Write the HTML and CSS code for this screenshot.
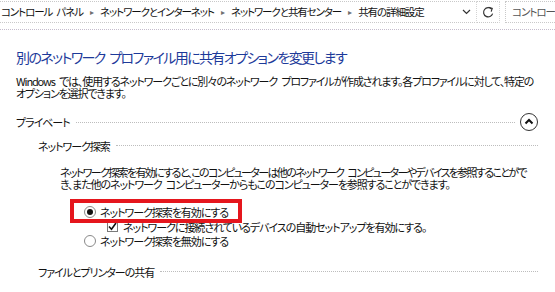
FILE: index.html
```html
<!DOCTYPE html>
<html lang="ja">
<head>
<meta charset="utf-8">
<title>共有の詳細設定</title>
<link rel="stylesheet" href="styles.css">
</head>
<body>
<div class="addrbar">
  <div class="crumbs">
    <span class="crumb">コントロール パネル</span><span class="sep">▸</span>
    <span class="crumb">ネットワークとインターネット</span><span class="sep">▸</span>
    <span class="crumb">ネットワークと共有センター</span><span class="sep">▸</span>
    <span class="crumb">共有の詳細設定</span>
    <span class="spacer"></span>
    <svg class="dd" width="9" height="6" viewBox="0 0 9 6"><path d="M1 1 L4.5 4.5 L8 1" fill="none" stroke="#333" stroke-width="1.2"/></svg>
  </div>
  <div class="refresh">
    <svg width="12" height="13" viewBox="0 0 12 13"><path d="M9.6 3.2 A4.6 4.6 0 1 0 10.6 7.6" fill="none" stroke="#333" stroke-width="1.2"/><path d="M6.6 1.2 L10.2 2.4 L9.2 5.6" fill="none" stroke="#333" stroke-width="1.2"/></svg>
  </div>
  <div class="search">コントロール パネルの検索</div>
</div>
<div class="rule"></div>
<main class="content">
  <h1 class="title">別のネットワーク プロファイル用に共有オプションを変更します</h1>
  <p class="desc">Windows では、使用するネットワークごとに別々のネットワーク プロファイルが作成されます。各プロファイルに対して、特定の<br>オプションを選択できます。</p>
  <div class="group">
    <span class="label">プライベート</span>
    <span class="line"></span>
    <span class="toggle"><svg width="10" height="7" viewBox="0 0 10 7"><path d="M1.5 5.5 L5 2 L8.5 5.5" fill="none" stroke="#111" stroke-width="2"/></svg></span>
  </div>
  <div class="sub">
    <span class="label">ネットワーク探索</span>
    <span class="line"></span>
  </div>
  <p class="para"><span class="pl1">ネットワーク探索を有効にすると、このコンピューターは他のネットワーク コンピューターやデバイスを参照することがで</span><br><span class="pl2">き、また他のネットワーク コンピューターからもこのコンピューターを参照することができます。</span></p>
  <div class="options">
    <div class="opt r1"><span class="radio on"></span><span>ネットワーク探索を有効にする</span></div>
    <div class="opt check"><span class="cb"><svg width="9" height="9" viewBox="0 0 9 9"><path d="M1 4.5 L3.5 7.2 L8 1" fill="none" stroke="#111" stroke-width="1.6"/></svg></span><span>ネットワークに接続されているデバイスの自動セットアップを有効にする。</span></div>
    <div class="opt r3"><span class="radio"></span><span>ネットワーク探索を無効にする</span></div>
    <div class="highlight"></div>
  </div>
  <div class="sub last">
    <span class="label">ファイルとプリンターの共有</span>
    <span class="line"></span>
  </div>
</main>
</body>
</html>
```
FILE: styles.css
```css
* { box-sizing: border-box; }
html, body { margin: 0; padding: 0; }
body {
  width: 555px;
  height: 292px;
  overflow: hidden;
  background: #fff;
  color: #111;
  font-family: "Noto Sans CJK JP", "Noto Sans", sans-serif;
  font-feature-settings: "palt";
  word-spacing: 3px;
}
.addrbar {
  display: flex;
  height: 23px;
  padding-top: 1px;
}
.crumbs {
  width: 477px;
  height: 22px;
  border-top: 1px dotted #c9c9c9;
  border-bottom: 1px dotted #c9c9c9;
  border-right: 1px dotted #d4d4d4;
  display: flex;
  align-items: center;
  padding-left: 1px;
  font-size: 10.5px;
  letter-spacing: -1.1px;
  line-height: 14px;
  white-space: nowrap;
}
.sep {
  color: #707070;
  font-size: 8px;
  letter-spacing: 0;
  margin: 0 6px 0 7px;
}
.spacer { flex: 1; }
.dd { margin-right: 5px; }
.refresh {
  width: 23px;
  height: 22px;
  border-top: 1px dotted #c9c9c9;
  border-bottom: 1px dotted #c9c9c9;
  border-right: 1px dotted #d4d4d4;
  display: flex;
  align-items: center;
  justify-content: center;
}
.search {
  margin-left: 5px;
  flex: 1;
  height: 22px;
  border: 1px dotted #c9c9c9;
  border-right: none;
  padding-left: 6px;
  font-size: 10.5px;
  letter-spacing: -1px;
  line-height: 20px;
  color: #555;
  white-space: nowrap;
  overflow: hidden;
}
.rule {
  margin-top: 6px;
  height: 1px;
  border-top: 1px dotted #c4bccc;
}
.content {
  padding: 0 17px 0 16px;
}
.title {
  margin: 17px 0 0;
  font-size: 14px;
  letter-spacing: -1.6px;
  font-weight: normal;
  line-height: 20px;
  color: #1d3a9a;
  white-space: nowrap;
}
.desc {
  margin: 8px 0 0;
  font-size: 11px;
  letter-spacing: -1.15px;
  line-height: 12px;
  white-space: nowrap;
}
.group {
  margin-top: 14px;
  height: 18px;
  display: flex;
  align-items: center;
}
.label {
  font-size: 11px;
  letter-spacing: -1.05px;
  line-height: 14px;
  white-space: nowrap;
}
.line {
  flex: 1;
  height: 1px;
  border-top: 1px dotted #bdbdbd;
  margin-left: 6px;
}
.group .line { margin-right: 5px; margin-top: 1px; }
.toggle {
  width: 18px;
  height: 18px;
  border: 1px solid #333;
  border-radius: 50%;
  display: flex;
  align-items: center;
  justify-content: center;
}
.toggle svg { margin-top: -1px; }
.sub {
  margin-top: 8px;
  padding-left: 22px;
  height: 14px;
  display: flex;
  align-items: center;
}
.sub .line { margin-top: -2px; }
.sub.last { margin-top: 17px; }
.para {
  margin: 14px 0 0;
  padding-left: 44px;
  font-size: 11px;
  line-height: 11.5px;
  white-space: nowrap;
}
.pl1 { letter-spacing: -1.65px; }
.pl2 { letter-spacing: -1.1px; }
.options {
  position: relative;
  margin-top: 14px;
}
.opt {
  display: flex;
  align-items: center;
  gap: 4px;
  height: 15px;
  padding-left: 68px;
  font-size: 11px;
  letter-spacing: -1.05px;
  white-space: nowrap;
}
.opt.r3 { height: 14px; }
.opt.check { padding-left: 91px; gap: 5px; }
.radio {
  width: 12px;
  height: 12px;
  border: 1px solid #8a8a8a;
  border-radius: 50%;
  background: #fff;
  display: flex;
  align-items: center;
  justify-content: center;
}
.radio.on::after {
  content: "";
  width: 6px;
  height: 6px;
  border-radius: 50%;
  background: #111;
}
.cb {
  width: 11px;
  height: 11px;
  border: 1px solid #7a7a7a;
  background: #fff;
  display: flex;
  align-items: center;
  justify-content: center;
}
.highlight {
  position: absolute;
  left: 54px;
  top: -5px;
  width: 172px;
  height: 24px;
  border: 4px solid #e5161d;
}
```
